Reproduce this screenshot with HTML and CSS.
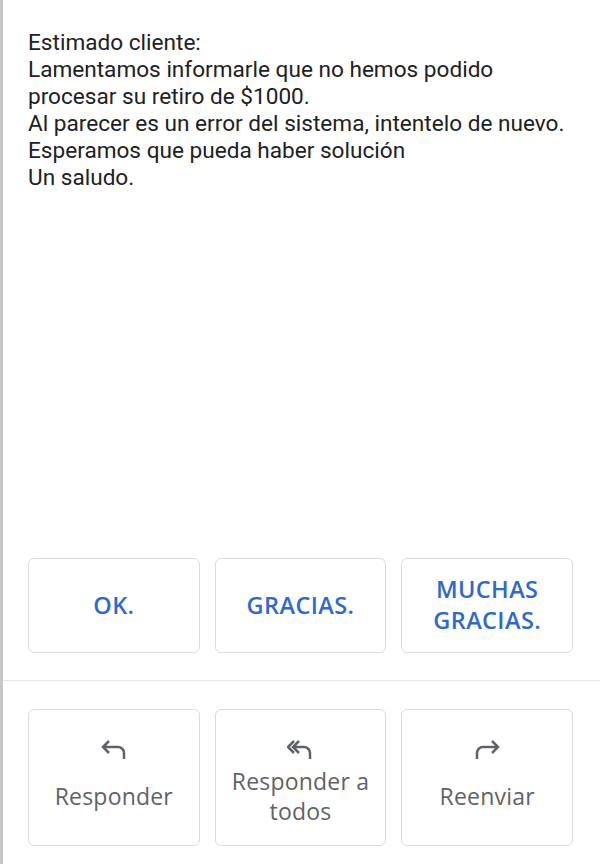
FILE: index.html
```html
<!DOCTYPE html>
<html lang="es">
<head>
    <meta charset="UTF-8">
    <meta name="viewport" content="width=device-width, initial-scale=1.0">
    <title>Mensaje</title>
    <link rel="stylesheet" href="styles.css">
</head>
<body>
    <div class="page">
        <div class="message">
            Estimado cliente:<br>
            Lamentamos informarle que no hemos podido<br>
            procesar su retiro de $1000.<br>
            Al parecer es un error del sistema, intentelo de nuevo.<br>
            Esperamos que pueda haber solución<br>
            Un saludo.
        </div>

        <div class="smart-replies">
            <button class="chip">OK.</button>
            <button class="chip">GRACIAS.</button>
            <button class="chip">MUCHAS<br>GRACIAS.</button>
        </div>

        <div class="divider"></div>

        <div class="actions">
            <button class="action">
                <svg class="icon" width="26" height="22" viewBox="0 0 26 22">
                    <path d="M8 3L2 9l6 6M2 9h15a6 6 0 0 1 6 6v6" />
                </svg>
                <span class="label">Responder</span>
            </button>
            <button class="action">
                <svg class="icon" width="26" height="22" viewBox="0 0 26 22">
                    <path d="M7 3L1 9l6 6M12 3L6 9l6 6M6 9h11a6 6 0 0 1 6 6v6" />
                </svg>
                <span class="label">Responder a<br>todos</span>
            </button>
            <button class="action">
                <svg class="icon flip" width="26" height="22" viewBox="0 0 26 22">
                    <path d="M8 3L2 9l6 6M2 9h15a6 6 0 0 1 6 6v6" />
                </svg>
                <span class="label">Reenviar</span>
            </button>
        </div>
    </div>
</body>
</html>
```

FILE: styles.css
```css
body {
    margin: 0;
    padding: 0;
    background-color: #fff;
    font-family: Roboto, "Liberation Sans", sans-serif;
}

.page {
    display: flex;
    flex-direction: column;
    height: 864px;
    border-left: 3px solid #c6c6c6;
    box-sizing: border-box;
    padding-bottom: 18px;
}

.message {
    padding: 29px 20px 0 25px;
    font-size: 22.6px;
    line-height: 27px;
    color: #202124;
}

.smart-replies,
.actions {
    display: grid;
    grid-template-columns: repeat(3, 1fr);
    gap: 15px;
    margin: 0 27px 0 25px;
}

.smart-replies {
    margin-top: auto;
}

button {
    font-family: "Open Sans", Roboto, sans-serif;
    background-color: #fff;
    border: 1.5px solid #dadce0;
    border-radius: 6px;
    padding: 0;
    cursor: pointer;
}

.chip {
    height: 95px;
    color: #2f69cc;
    font-size: 23.5px;
    font-weight: 600;
    line-height: 31px;
    letter-spacing: 0.4px;
}

.divider {
    height: 1.5px;
    background-color: #e6e6e6;
    margin-top: 27px;
}

.actions {
    margin-top: 28px;
}

.action {
    height: 137px;
    display: flex;
    flex-direction: column;
    align-items: center;
    padding: 28px 0 14px;
    color: #5f6368;
}

.icon {
    fill: none;
    stroke: #5f6368;
    stroke-width: 2.5;
    flex-shrink: 0;
}

.flip {
    transform: scaleX(-1);
}

.label {
    flex: 1;
    display: flex;
    align-items: center;
    font-size: 23px;
    line-height: 30px;
    letter-spacing: 0.2px;
    text-align: center;
}
```
